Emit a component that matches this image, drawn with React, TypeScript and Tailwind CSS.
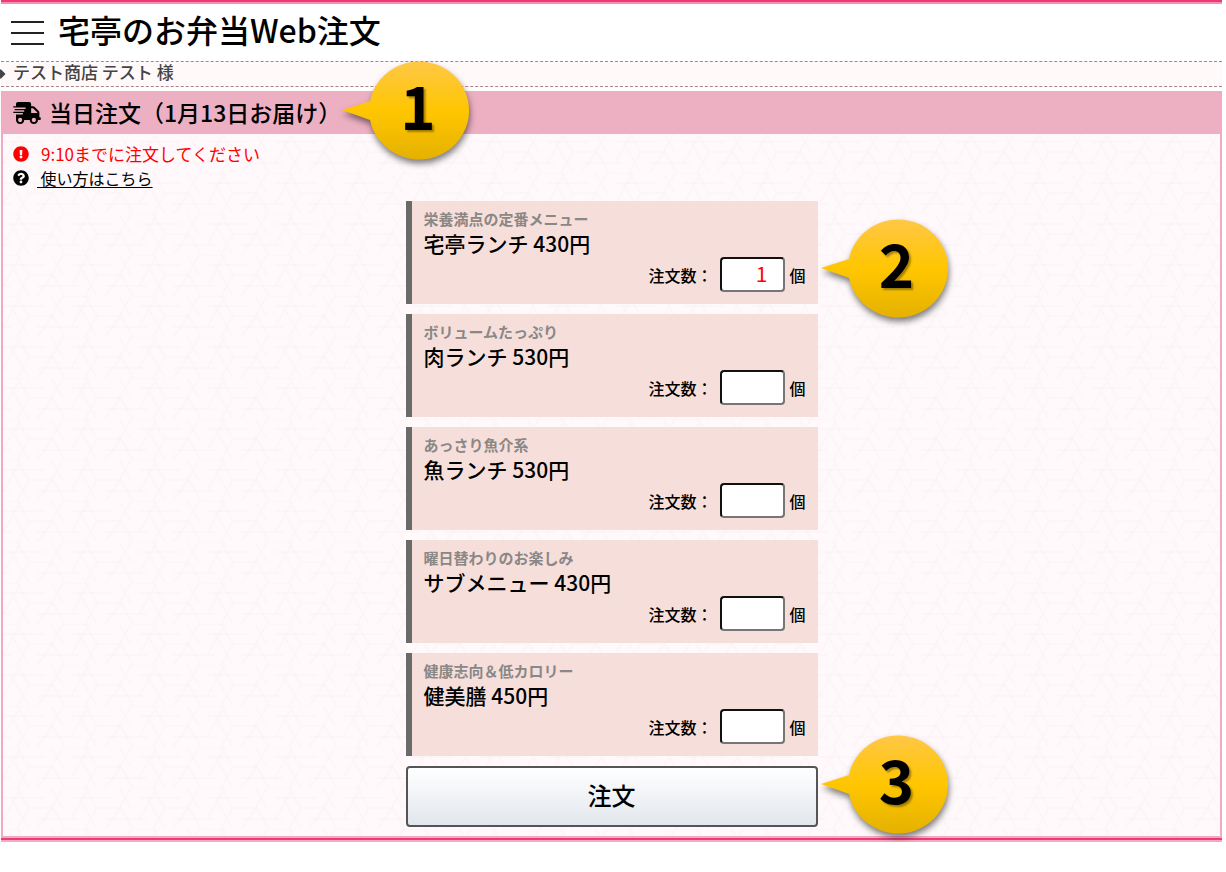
import React, { useState } from 'react';
import { FaCaretRight, FaExclamationCircle, FaQuestionCircle, FaShippingFast } from 'react-icons/fa';

type MenuItem = {
  id: string;
  caption: string;
  name: string;
  price: number;
  count: string;
};

const MENU_ITEMS: MenuItem[] = [
  { id: 'takutei', caption: '栄養満点の定番メニュー', name: '宅亭ランチ', price: 430, count: '1' },
  { id: 'niku', caption: 'ボリュームたっぷり', name: '肉ランチ', price: 530, count: '' },
  { id: 'sakana', caption: 'あっさり魚介系', name: '魚ランチ', price: 530, count: '' },
  { id: 'sub', caption: '曜日替わりのお楽しみ', name: 'サブメニュー', price: 430, count: '' },
  { id: 'kenbi', caption: '健康志向＆低カロリー', name: '健美膳', price: 450, count: '' },
];

// 組亀甲風の背景模様
const PatternBackground = (): React.JSX.Element => (
  <svg className="absolute inset-0 -z-10 h-full w-full" aria-hidden="true">
    <defs>
      <pattern id="weave" width="68" height="41" patternUnits="userSpaceOnUse">
        <g fill="none" stroke="#000" strokeOpacity="0.013" strokeWidth="2">
          <path d="M0 10H42M34 31H68M0 31H8M26 20H50M60 0H68M0 0H16" />
          <path d="M8 10L26 41M42 31L60 0M26 20L14 41M50 20L62 41M60 20L48 0M26 20L14 0M0 31L18 0M50 20L34 41" />
        </g>
      </pattern>
    </defs>
    <rect width="100%" height="100%" fill="url(#weave)" />
  </svg>
);

const Callout = ({ number, className }: { number: number; className: string }): React.JSX.Element => (
  <div className={`pointer-events-none absolute z-10 h-[98px] w-[128px] ${className}`}>
    <svg viewBox="0 0 128 98" className="absolute inset-0 overflow-visible drop-shadow-[1px_4px_3px_rgba(0,0,0,0.5)]" aria-hidden="true">
      <defs>
        <linearGradient id={`callout-${number}`} x1="0" y1="0" x2="0" y2="1">
          <stop offset="0" stopColor="#ffc746" />
          <stop offset="0.5" stopColor="#ffc600" />
          <stop offset="1" stopColor="#e5b100" />
        </linearGradient>
      </defs>
      <path d="M0 49L28 40A50 49 0 1 1 28 59Z" fill={`url(#callout-${number})`} />
    </svg>
    <span className="relative flex h-full items-center justify-center pb-3 pl-6 text-[60px] leading-none font-bold text-shadow-[2px_2px_2px_rgb(0_0_0/0.35)]">
      {number}
    </span>
  </div>
);

const MenuCard = ({ item, children }: { item: MenuItem; children?: React.ReactNode }): React.JSX.Element => {
  const [count, setCount] = useState(item.count);

  return (
    <li className="relative border-l-6 border-[#6a6a6a] bg-[#f6dfdb] px-3 pt-2 pb-3">
      <p className="text-[15px] leading-5 font-bold text-[#8a8785]">{item.caption}</p>
      <h3 className="text-[21px] leading-7 font-medium">{`${item.name} ${item.price}円`}</h3>
      <div className="flex items-center justify-end">
        <label htmlFor={item.id} className="font-medium">注文数：</label>
        <input
          id={item.id}
          type="text"
          inputMode="numeric"
          value={count}
          onChange={(e) => setCount(e.target.value)}
          className="mr-1 ml-2 h-[35px] w-[65px] rounded border-2 border-t-[#111] border-r-[#767676] border-b-[#767676] border-l-[#111] bg-white pr-4 pb-1 text-right text-[21px] text-[#ff0000]"
        />
        <span className="font-medium">個</span>
      </div>
      {children}
    </li>
  );
};

const App = (): React.JSX.Element => (
  <div className="mr-1 ml-px font-['Noto_Sans_CJK_JP',sans-serif] text-base text-black">
    <header className="border-t-2 border-[#ee3b78]">
      <div className="flex h-[59px] items-center gap-3.5 border-t-2 border-[#f68fb0] pl-2.5">
        <button type="button" aria-label="メニュー" className="flex h-6 w-[33px] flex-col justify-between">
          <span className="h-0.5 w-full bg-[#222]" />
          <span className="h-0.5 w-full bg-[#222]" />
          <span className="h-0.5 w-full bg-[#222]" />
        </button>
        <h1 className="pb-2 text-[32px] leading-10 font-medium">宅亭のお弁当Web注文</h1>
      </div>
    </header>
    <div className="flex h-[26px] items-center gap-2 border-y border-dashed border-[#a8858a] bg-[#fffaf9] text-[#444]">
      <FaCaretRight className="-ml-1 h-4 w-3" />
      <p className="-ml-1 pb-1 text-[17px] leading-5 font-medium">テスト商店 テスト 様</p>
    </div>

    <main className="relative isolate mt-1 border-2 border-t-0 border-[#f0aac2] bg-[#fff9fb]">
      <PatternBackground />
      <div className="relative flex h-[43px] items-center gap-2 bg-[#edb0c3] pl-2.5">
        <FaShippingFast className="h-[22px] w-7" />
        <h2 className="pb-0.5 text-[23px] leading-8 font-medium">当日注文（1月13日お届け）</h2>
        <Callout number={1} className="top-[-30px] left-[339px]" />
      </div>

      <div className="flex flex-col px-2.5 pt-2">
        <p className="flex items-center gap-3 text-[17px] leading-6 text-[#ff0000]">
          <FaExclamationCircle className="h-4 w-4" />
          9:10までに注文してください
        </p>
        <p className="flex items-center gap-2 leading-6">
          <FaQuestionCircle className="h-4 w-4" />
          <a href="#usage" className="whitespace-pre underline underline-offset-2">{' 使い方はこちら'}</a>
        </p>
      </div>

      <form className="mx-auto w-[412px] pt-[11px] pb-[9px]" onSubmit={(e) => e.preventDefault()}>
        <ul className="flex flex-col gap-2.5">
          {MENU_ITEMS.map((item) => (
            <MenuCard key={item.id} item={item}>
              {item.id === 'takutei' && <Callout number={2} className="top-[18px] left-[409px]" />}
            </MenuCard>
          ))}
        </ul>
        <div className="relative mt-2.5">
          <button
            type="submit"
            className="h-[61px] w-full rounded border-2 border-[#555] bg-linear-to-b from-white to-[#e2e7ed] pb-1 text-2xl font-medium"
          >
            注文
          </button>
          <Callout number={3} className="top-[-31px] left-[415px]" />
        </div>
      </form>
    </main>
    <div className="h-1 border-t-2 border-[#ee3b78] bg-[#f9a9c0]" />
  </div>
);

export default App;
